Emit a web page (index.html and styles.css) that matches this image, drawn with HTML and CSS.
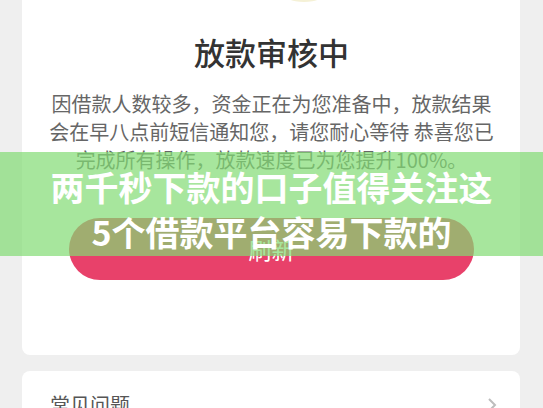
FILE: index.html
```html
<!DOCTYPE html>
<html lang="zh-CN">
<head>
  <meta charset="UTF-8" />
  <meta name="viewport" content="width=device-width, initial-scale=1.0"/>
  <title>放款审核中</title>
  <link rel="stylesheet" href="styles.css">
</head>
<body>
  <div class="page">
    <div class="card status-card">
      <div class="hero-icon">
        <svg width="120" height="62" viewBox="0 0 120 62">
          <ellipse cx="92" cy="52" rx="22" ry="10" fill="#f5f1d6"/>
        </svg>
      </div>
      <h1 class="status-title">放款审核中</h1>
      <p class="status-text">因借款人数较多，资金正在为您准备中，放款结果<br>会在早八点前短信通知您，请您耐心等待 恭喜您已<br>完成所有操作，放款速度已为您提升100%。</p>
      <button class="refresh-btn">刷新</button>
    </div>

    <div class="card faq-card">
      <span class="faq-title">常见问题</span>
      <svg class="chevron" width="10" height="16" viewBox="0 0 10 16">
        <path d="M2 2 L8 8 L2 14" fill="none" stroke="#bdbdbd" stroke-width="2"/>
      </svg>
    </div>
  </div>

  <div class="banner">
    <div class="banner-line">两千秒下款的口子值得关注这</div>
    <div class="banner-line">5个借款平台容易下款的</div>
  </div>
</body>
</html>
```

FILE: styles.css
```css
body {
  margin: 0;
  background: #efefef;
  font-family: "Noto Sans CJK SC", "Noto Sans", sans-serif;
  overflow: hidden;
}

.page {
  padding: 0 23px 0 22px;
}

.card {
  background: #fff;
  border-radius: 8px;
}

.status-card {
  margin-top: -60px;
  padding: 0 46px 75px 47px;
  text-align: center;
}

.hero-icon {
  height: 62px;
  display: flex;
  justify-content: center;
}

.status-title {
  margin: 29px 0 0;
  font-size: 31px;
  line-height: 42px;
  font-weight: 500;
  color: #333;
}

.status-text {
  margin: 17px -30px 0;
  font-size: 20px;
  line-height: 28px;
  color: #666;
  white-space: nowrap;
}

.refresh-btn {
  display: block;
  width: 100%;
  height: 62px;
  margin-top: 44px;
  border: none;
  border-radius: 31px;
  background: #e8416a;
  color: #fff;
  font-family: inherit;
  font-size: 23px;
}

.faq-card {
  margin-top: 16px;
  padding: 20px 23px 20px 28px;
  display: flex;
  align-items: center;
  justify-content: space-between;
}

.faq-title {
  font-size: 20px;
  line-height: 28px;
  color: #555;
}

.banner {
  position: absolute;
  left: 0;
  right: 0;
  top: 152px;
  height: 104px;
  box-sizing: border-box;
  padding-top: 12px;
  background: rgba(130, 220, 115, 0.7);
  text-align: center;
}

.banner-line {
  font-size: 34px;
  line-height: 45px;
  font-weight: 700;
  color: #fff;
}
```
